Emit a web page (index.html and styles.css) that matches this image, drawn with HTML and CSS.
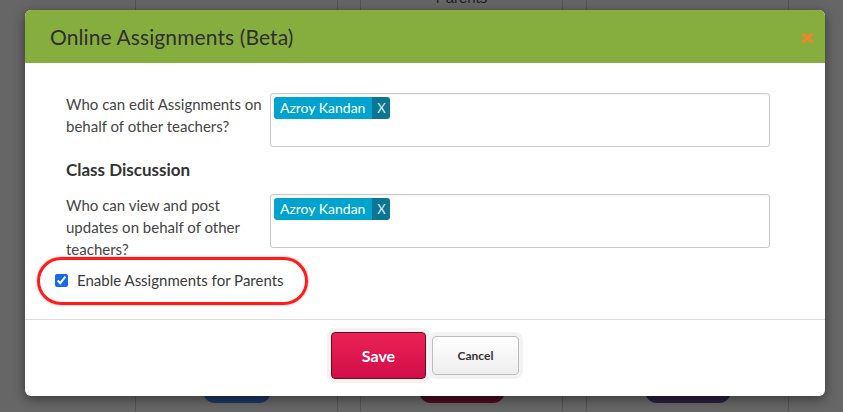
FILE: index.html
```html
<!DOCTYPE html>
<html lang="en">
<head>
<meta charset="utf-8">
<title>Online Assignments (Beta)</title>
<link rel="stylesheet" href="styles.css">
</head>
<body>
<div class="page">
  <div class="col col-a"></div>
  <div class="col col-b"><span class="pill pill-blue"></span></div>
  <div class="col col-gap"></div>
  <div class="col col-b"><span class="col-title">Parents</span><span class="pill pill-red"></span></div>
  <div class="col col-gap2"></div>
  <div class="col col-b"><span class="pill pill-purple"></span></div>
  <div class="col col-end"></div>
</div>

<div class="modal">
  <div class="modal-header">
    <h2 class="modal-title">Online Assignments (Beta)</h2>
    <svg class="modal-close" width="11" height="10" viewBox="0 0 11 10" aria-label="close">
      <path d="M1.5 1.5 L9.5 8.5 M9.5 1.5 L1.5 8.5" stroke="#f5812a" stroke-width="3" stroke-linecap="round"/>
    </svg>
  </div>
  <div class="modal-body">
    <div class="field-row">
      <div class="field-label">Who can edit Assignments on behalf of other teachers?</div>
      <div class="tag-box">
        <span class="tag"><span class="tag-name">Azroy Kandan</span><span class="tag-x">X</span></span>
      </div>
    </div>
    <h3 class="section-title">Class Discussion</h3>
    <div class="field-row">
      <div class="field-label">Who can view and post updates on behalf of other teachers?</div>
      <div class="tag-box">
        <span class="tag"><span class="tag-name">Azroy Kandan</span><span class="tag-x">X</span></span>
      </div>
    </div>
    <label class="check-row">
      <input type="checkbox" class="check" checked>
      <span>Enable Assignments for Parents</span>
      <span class="highlight"></span>
    </label>
  </div>
  <div class="modal-footer">
    <button class="btn btn-save">Save</button>
    <button class="btn btn-cancel">Cancel</button>
  </div>
</div>
</body>
</html>
```

FILE: styles.css
```css
* { box-sizing: border-box; }

html, body {
  margin: 0;
  padding: 0;
  width: 843px;
  height: 412px;
  overflow: hidden;
  background: #666666;
  font-family: Lato, "Open Sans", Arial, sans-serif;
}

/* background page (dimmed) */
.page {
  display: flex;
  height: 412px;
}
.col {
  position: relative;
  height: 100%;
}
.col-a { width: 135px; }
.col-b {
  width: 202px;
  border-left: 1px solid #545454;
  display: flex;
  flex-direction: column;
  align-items: center;
  justify-content: space-between;
}
.col-gap { width: 23px; border-left: 1px solid #545454; }
.col-gap2 { width: 24px; border-left: 1px solid #545454; }
.col-end { flex: 1; border-left: 1px solid #545454; }

.col-title {
  font-family: "Liberation Sans", Arial, sans-serif;
  font-size: 15px;
  color: #1e1e1e;
  margin-top: -11px;
  line-height: 18px;
}
.pill {
  display: block;
  height: 40px;
  border-radius: 0 0 12px 12px;
  margin-top: auto;
  margin-bottom: 9px;
}
.pill-blue { width: 68px; background: #1b3864; }
.pill-red { width: 86px; background: #4a0d1c; }
.pill-purple { width: 86px; background: #2c1d3b; }

/* modal */
.modal {
  position: absolute;
  left: 25px;
  top: 10px;
  width: 800px;
  height: 386px;
  background: #ffffff;
  border-radius: 6px;
  box-shadow: 0 3px 12px rgba(0, 0, 0, 0.45);
  display: flex;
  flex-direction: column;
  overflow: hidden;
}

.modal-header {
  height: 53px;
  background: #86ae3f;
  display: flex;
  align-items: center;
  justify-content: space-between;
  padding: 0 12px 0 25px;
}
.modal-title {
  margin: 0;
  font-size: 21px;
  font-weight: 400;
  color: #2f2f2f;
  letter-spacing: 0.1px;
}
.modal-close {
  display: block;
  margin-top: 2px;
}

.modal-body {
  padding: 30px 55px 28px 41px;
  border-bottom: 1px solid #dcdcdc;
  color: #444444;
  font-size: 15px;
  line-height: 22px;
}

.field-row {
  display: flex;
  align-items: flex-start;
}
.field-label {
  width: 204px;
  padding-right: 4px;
  color: #454545;
}
.tag-box {
  width: 500px;
  height: 54px;
  border: 1px solid #c9c9c9;
  border-radius: 3px;
  padding: 2px 3px;
  box-shadow: inset 0 1px 2px rgba(0, 0, 0, 0.06);
}
.tag {
  display: inline-flex;
  height: 22px;
  border-radius: 3px;
  overflow: hidden;
  font-size: 14px;
  line-height: 22px;
  color: #ffffff;
}
.tag-name {
  background: #00a3cd;
  padding: 0 7px 0 6px;
}
.tag-x {
  background: #0b7593;
  width: 18px;
  text-align: center;
  color: #d8eef5;
  font-size: 13px;
}

.section-title {
  margin: 12px 0 13px;
  font-size: 17px;
  line-height: 22px;
  font-weight: 700;
  color: #333333;
}

.check-row {
  position: relative;
  display: flex;
  align-items: center;
  gap: 9px;
  margin: 9px 0 0 -11px;
  width: 253px;
  color: #3a3a3a;
}
.check {
  margin: 0;
  width: 13px;
  height: 13px;
  accent-color: #1669ec;
}
.highlight {
  position: absolute;
  left: -18px;
  top: -12px;
  width: 271px;
  height: 48px;
  border: 3px solid #ff1c1c;
  border-radius: 24px;
  box-shadow: 0 0 2px rgba(255, 40, 40, 0.6);
  pointer-events: none;
}

.modal-footer {
  flex: 1;
  display: flex;
  justify-content: center;
  align-items: center;
  gap: 6px;
  padding: 0 0 5px 0;
}
.btn {
  font-family: Lato, "Open Sans", Arial, sans-serif;
  font-weight: 700;
  border-radius: 4px;
  cursor: pointer;
  box-shadow: 0 0 0 4px #f2f2f2;
}
.btn-save {
  width: 95px;
  height: 47px;
  font-size: 16px;
  color: #ffffff;
  background: linear-gradient(#ec2156, #cf0f48);
  border: 1px solid #6a0822;
}
.btn-cancel {
  width: 87px;
  height: 39px;
  font-size: 12px;
  color: #333333;
  background: linear-gradient(#ffffff, #eeeeee);
  border: 1px solid #bdbdbd;
}
```
